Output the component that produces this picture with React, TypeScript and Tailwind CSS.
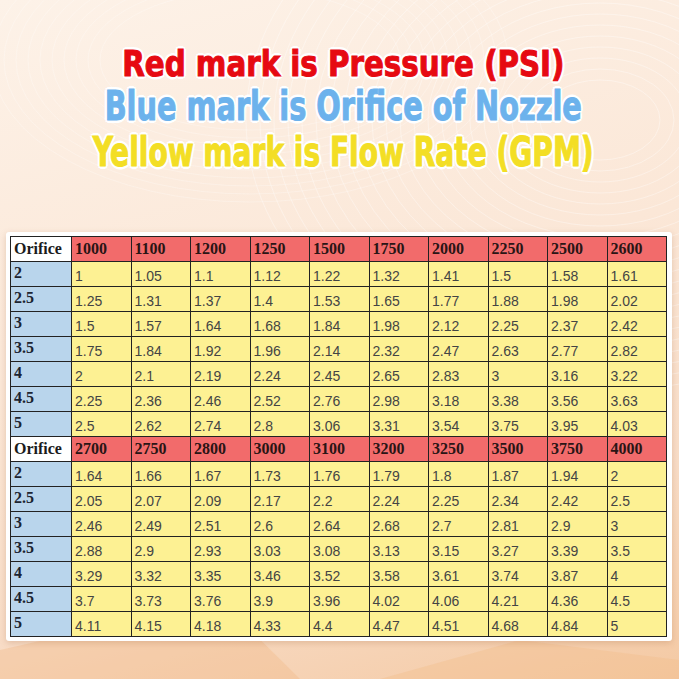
import React from "react";

const blocks = [
  {
    psi: ["1000", "1100", "1200", "1250", "1500", "1750", "2000", "2250", "2500", "2600"],
    rows: [
      ["2", "1", "1.05", "1.1", "1.12", "1.22", "1.32", "1.41", "1.5", "1.58", "1.61"],
      ["2.5", "1.25", "1.31", "1.37", "1.4", "1.53", "1.65", "1.77", "1.88", "1.98", "2.02"],
      ["3", "1.5", "1.57", "1.64", "1.68", "1.84", "1.98", "2.12", "2.25", "2.37", "2.42"],
      ["3.5", "1.75", "1.84", "1.92", "1.96", "2.14", "2.32", "2.47", "2.63", "2.77", "2.82"],
      ["4", "2", "2.1", "2.19", "2.24", "2.45", "2.65", "2.83", "3", "3.16", "3.22"],
      ["4.5", "2.25", "2.36", "2.46", "2.52", "2.76", "2.98", "3.18", "3.38", "3.56", "3.63"],
      ["5", "2.5", "2.62", "2.74", "2.8", "3.06", "3.31", "3.54", "3.75", "3.95", "4.03"],
    ],
  },
  {
    psi: ["2700", "2750", "2800", "3000", "3100", "3200", "3250", "3500", "3750", "4000"],
    rows: [
      ["2", "1.64", "1.66", "1.67", "1.73", "1.76", "1.79", "1.8", "1.87", "1.94", "2"],
      ["2.5", "2.05", "2.07", "2.09", "2.17", "2.2", "2.24", "2.25", "2.34", "2.42", "2.5"],
      ["3", "2.46", "2.49", "2.51", "2.6", "2.64", "2.68", "2.7", "2.81", "2.9", "3"],
      ["3.5", "2.88", "2.9", "2.93", "3.03", "3.08", "3.13", "3.15", "3.27", "3.39", "3.5"],
      ["4", "3.29", "3.32", "3.35", "3.46", "3.52", "3.58", "3.61", "3.74", "3.87", "4"],
      ["4.5", "3.7", "3.73", "3.76", "3.9", "3.96", "4.02", "4.06", "4.21", "4.36", "4.5"],
      ["5", "4.11", "4.15", "4.18", "4.33", "4.4", "4.47", "4.51", "4.68", "4.84", "5"],
    ],
  },
];

// white halo round the heading letters
const outline =
  "[-webkit-text-stroke:1px_currentColor] [text-shadow:-2px_-2px_0_#fff,2px_-2px_0_#fff,-2px_2px_0_#fff,2px_2px_0_#fff,0_3px_0_#fff,0_-3px_0_#fff,3px_0_0_#fff,-3px_0_0_#fff]";

const Swirls = () => (
  <svg className="absolute inset-0 pointer-events-none" width="679" height="679" viewBox="0 0 679 679">
    {Array.from({ length: 22 }).map((_, i) => (
      <ellipse
        key={i}
        cx="600"
        cy="120"
        rx={60 + i * 14}
        ry={40 + i * 11}
        fill="none"
        stroke="#ffffff"
        strokeOpacity={0.35}
        strokeWidth="1"
      />
    ))}
    {Array.from({ length: 10 }).map((_, i) => (
      <ellipse
        key={"b" + i}
        cx="250"
        cy="60"
        rx={150 + i * 12}
        ry={70 + i * 8}
        fill="none"
        stroke="#ffffff"
        strokeOpacity={0.25}
        strokeWidth="1"
      />
    ))}
    <path d="M0 650 L220 600 L300 679 L0 679 Z" fill="#f1b885" fillOpacity="0.35" />
    <path d="M380 679 L520 640 L679 660 L679 679 Z" fill="#f3bf8d" fillOpacity="0.4" />
  </svg>
);

export default function App() {
  return (
    <div className="relative w-[679px] h-[679px] overflow-hidden bg-[linear-gradient(165deg,#fdf2e8_0%,#fbe7d7_45%,#f8dcc6_75%,#f4c9a3_100%)]">
      <Swirls />
      <div className="relative flex flex-col items-center pt-[41px] pl-[8px] font-['DejaVu_Sans_Condensed','DejaVu_Sans',sans-serif] font-bold [font-stretch:condensed] whitespace-nowrap">
        <div className={`h-[43px] leading-[45px] text-[36px] text-[#e60a12] scale-x-[0.905] ${outline}`}>
          Red mark is Pressure (PSI)
        </div>
        <div className={`h-[46px] leading-[45px] text-[40px] text-[#6cb2ec] scale-x-[0.8] ${outline}`}>
          Blue mark is Orifice of Nozzle
        </div>
        <div className={`h-[45px] leading-[45px] text-[40px] text-[#f3de25] scale-x-[0.78] ${outline}`}>
          Yellow mark is Flow Rate (GPM)
        </div>
      </div>

      <div className="relative mt-[57px] ml-[6px] w-[666px] rounded-[3px] bg-white p-[4px] shadow-[0_2px_6px_rgba(160,100,60,0.25)]">
        <table className="table-fixed border-collapse w-[657px] border border-[#222]">
          <colgroup>
            <col className="w-[61px]" />
            {Array.from({ length: 10 }).map((_, i) => (
              <col key={i} />
            ))}
          </colgroup>
          <tbody>
            {blocks.map((b, bi) => (
              <React.Fragment key={bi}>
                <tr className="h-[25px]">
                  <td className="border border-[#222] bg-white pl-[3px] font-['Liberation_Serif',serif] font-bold text-[16px] leading-none text-[#1b1b1b]">
                    Orifice
                  </td>
                  {b.psi.map((p) => (
                    <td
                      key={p}
                      className="border border-[#222] bg-[#f26b6b] pl-[3px] font-['Liberation_Serif',serif] font-bold text-[16px] leading-none text-[#2a1515]"
                    >
                      {p}
                    </td>
                  ))}
                </tr>
                {b.rows.map((r) => (
                  <tr key={r[0]} className="h-[25px]">
                    <td className="border border-[#222] bg-[#b9d5ec] pl-[3px] pb-[2px] font-['Liberation_Serif',serif] font-bold text-[16px] leading-none text-[#1c2431]">
                      {r[0]}
                    </td>
                    {r.slice(1).map((v, i) => (
                      <td
                        key={i}
                        className="border border-[#222] bg-[#fdf193] pl-[3px] pt-[3px] font-['Liberation_Sans',sans-serif] text-[14px] leading-none text-[#444]"
                      >
                        {v}
                      </td>
                    ))}
                  </tr>
                ))}
              </React.Fragment>
            ))}
          </tbody>
        </table>
      </div>
    </div>
  );
}
